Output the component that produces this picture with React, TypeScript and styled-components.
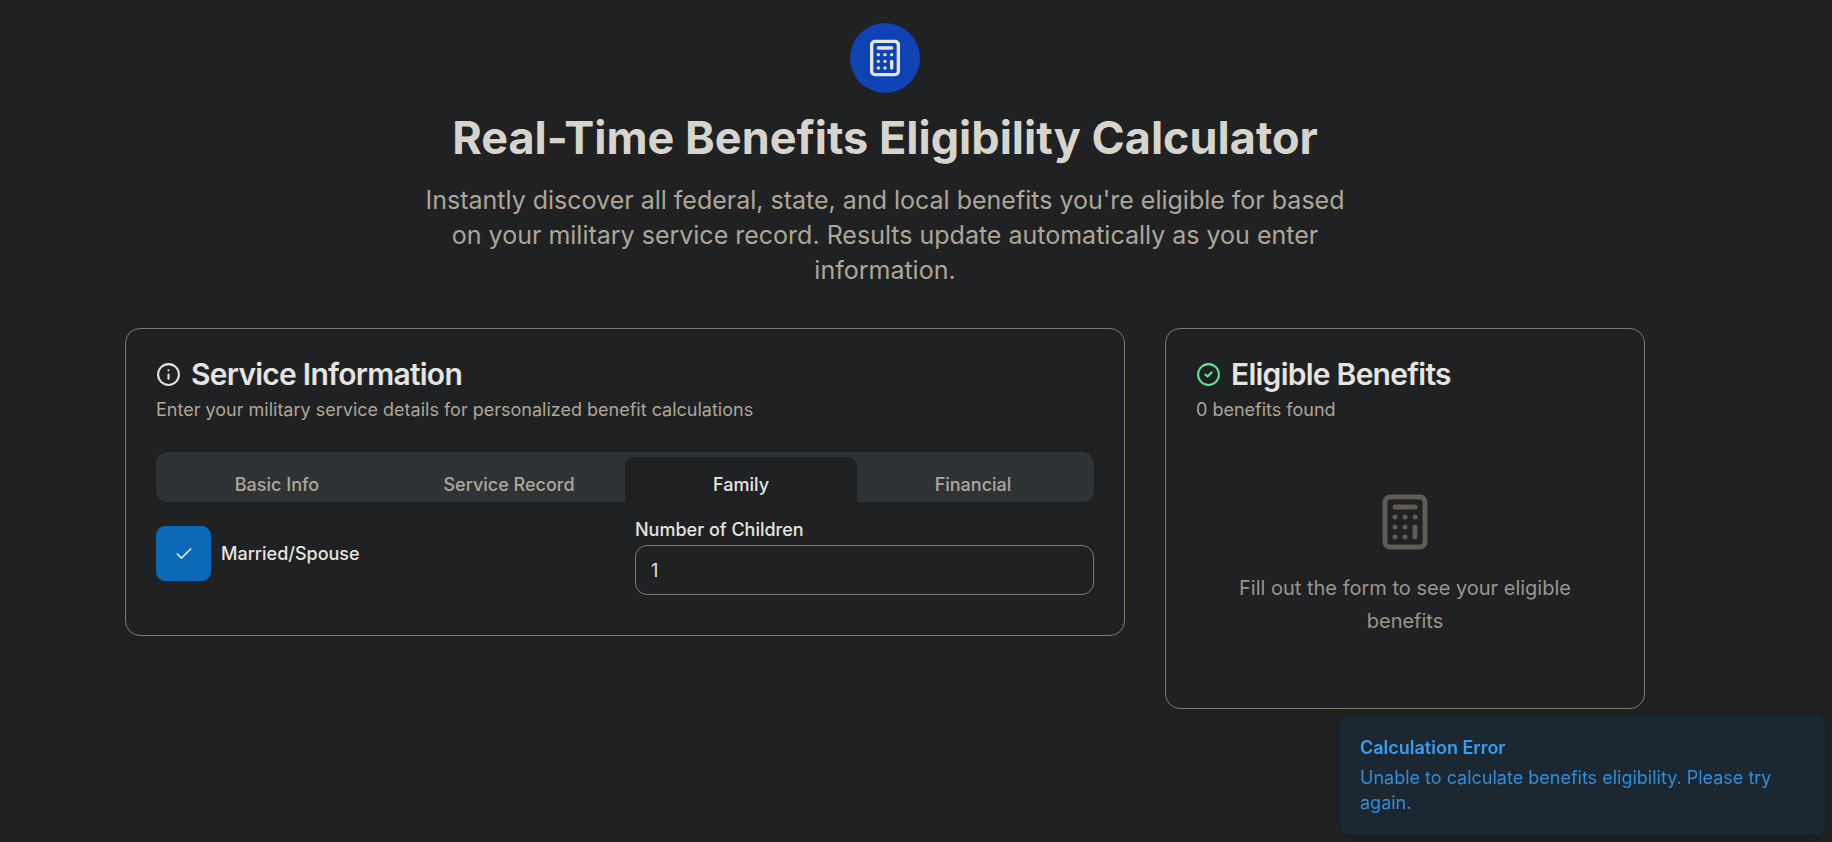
import React, { useState } from "react";
import styled, { createGlobalStyle, css } from "styled-components";

const color = {
  page: "#1f2122",
  muted: "#2f3335",
  border: "#82786a",
  heading: "#d7d4ce",
  text: "#e6e4e0",
  subtle: "#aea699",
};

const GlobalStyle = createGlobalStyle`
  *, *::before, *::after { box-sizing: border-box; }
  body {
    margin: 0;
    background: ${color.page};
    color: ${color.text};
    font-family: Inter, "Liberation Sans", sans-serif;
    font-size: 18px;
    line-height: 25px;
  }
  h1, h2, p { margin: 0; }
  button, input { font: inherit; color: inherit; }
`;

const Page = styled.div`
  padding: 23px 62px 40px 0;
`;

const Container = styled.main`
  max-width: 1600px;
  margin: 0 auto;
  padding: 0 40px;
`;

const Hero = styled.header`
  display: flex;
  flex-direction: column;
  align-items: center;
  gap: 20px;
  margin-bottom: 40px;
  text-align: center;
`;

const Badge = styled.div`
  display: grid;
  place-items: center;
  width: 70px;
  height: 70px;
  border-radius: 50%;
  background: #0f42b2;
`;

const PageTitle = styled.h1`
  color: ${color.heading};
  font-size: 45px;
  line-height: 50px;
  font-weight: 700;
`;

const Lead = styled.p`
  max-width: 940px;
  color: ${color.subtle};
  font-size: 25px;
  line-height: 35px;
`;

const Columns = styled.div`
  display: grid;
  grid-template-columns: repeat(3, minmax(0, 1fr));
  align-items: start;
  gap: 40px;
`;

const Card = styled.section<{ $wide?: boolean }>`
  grid-column: ${(p) => (p.$wide ? "span 2" : "span 1")};
  padding: 30px;
  border: 1px solid ${color.border};
  border-radius: 15px;
`;

const CardHeader = styled.div`
  display: flex;
  flex-direction: column;
  gap: 8px;
  padding-bottom: 30px;
`;

const CardTitle = styled.h2`
  display: flex;
  align-items: center;
  gap: 10px;
  font-size: 30px;
  line-height: 30px;
  font-weight: 600;
  letter-spacing: -0.025em;
`;

const CardText = styled.p`
  color: ${color.subtle};
`;

const TabList = styled.div`
  display: grid;
  grid-template-columns: repeat(4, 1fr);
  height: 50px;
  padding: 5px;
  border-radius: 12px;
  background: ${color.muted};
`;

const Tab = styled.button<{ $active: boolean }>`
  height: 55px;
  padding: 0 15px;
  border: 0;
  border-radius: 9px;
  background: none;
  color: ${color.subtle};
  font-weight: 500;
  cursor: pointer;
  ${(p) =>
    p.$active &&
    css`
      background: ${color.page};
      color: ${color.text};
    `}
`;

const Fields = styled.div`
  display: grid;
  grid-template-columns: repeat(2, minmax(0, 1fr));
  align-items: center;
  gap: 20px;
  padding: 10px 0;
`;

const CheckField = styled.div`
  display: flex;
  align-items: center;
  gap: 10px;
`;

const CheckBox = styled.span`
  display: grid;
  width: 55px;
  height: 55px;

  > * { grid-area: 1 / 1; }
  > svg { place-self: center; pointer-events: none; }
`;

const CheckInput = styled.input`
  appearance: none;
  width: 100%;
  height: 100%;
  margin: 0;
  border: 1px solid #0b69b7;
  border-radius: 9px;
  cursor: pointer;
  &:checked { background: #0b69b7; }
`;

const Label = styled.label`
  font-weight: 500;
`;

const NumberField = styled.div`
  display: flex;
  flex-direction: column;
  gap: 3px;
  padding-top: 5px;
`;

const NumberInput = styled.input`
  width: 100%;
  height: 50px;
  padding: 0 15px;
  border: 1px solid ${color.border};
  border-radius: 12px;
  background: none;
  appearance: textfield;
  &::-webkit-inner-spin-button { display: none; }
`;

const Empty = styled.div`
  display: flex;
  flex-direction: column;
  align-items: center;
  gap: 20px;
  padding: 40px 0;
  text-align: center;
`;

const EmptyText = styled.p`
  padding: 0 20px;
  color: #9c958b;
  font-size: 20px;
  line-height: 33px;
`;

const Toast = styled.div`
  position: fixed;
  right: 7px;
  bottom: 7px;
  display: flex;
  flex-direction: column;
  gap: 5px;
  width: 485px;
  padding: 20px;
  border-radius: 10px;
  background: #1c2831;
  color: #369ef2;
  box-shadow: 0 5px 15px rgba(0, 0, 0, 0.1);
`;

const ToastTitle = styled.p`
  font-weight: 600;
`;

const ToastText = styled.p`
  color: #318dd7;
`;

type IconProps = { size: number; stroke?: string; children: React.ReactNode };

const Icon = ({ size, stroke = "currentColor", children }: IconProps) => (
  <svg width={size} height={size} viewBox="0 0 24 24" fill="none" stroke={stroke} strokeWidth={2}
    strokeLinecap="round" strokeLinejoin="round" aria-hidden="true">
    {children}
  </svg>
);

const Calculator = ({ size, stroke }: { size: number; stroke?: string }) => (
  <Icon size={size} stroke={stroke}>
    <rect width="16" height="20" x="4" y="2" rx="2" />
    <path d="M8 6h8M16 14v4M16 10h.01M12 10h.01M8 10h.01M12 14h.01M8 14h.01M12 18h.01M8 18h.01" />
  </Icon>
);

const tabs = ["Basic Info", "Service Record", "Family", "Financial"];

export default function App() {
  const [active, setActive] = useState("Family");
  const [married, setMarried] = useState(true);
  const [children, setChildren] = useState("1");

  return (
    <>
      <GlobalStyle />
      <Page>
        <Container>
          <Hero>
            <Badge>
              <Calculator size={40} stroke="#e8e6e3" />
            </Badge>
            <PageTitle>Real-Time Benefits Eligibility Calculator</PageTitle>
            <Lead>
              Instantly discover all federal, state, and local benefits you're eligible for based on your military
              service record. Results update automatically as you enter information.
            </Lead>
          </Hero>
          <Columns>
            <Card $wide>
              <CardHeader>
                <CardTitle>
                  <Icon size={25}>
                    <circle cx="12" cy="12" r="10" />
                    <path d="M12 16v-4M12 8h.01" />
                  </Icon>
                  Service Information
                </CardTitle>
                <CardText>Enter your military service details for personalized benefit calculations</CardText>
              </CardHeader>
              <TabList role="tablist">
                {tabs.map((name) => (
                  <Tab key={name} type="button" role="tab" aria-selected={name === active} $active={name === active}
                    onClick={() => setActive(name)}>
                    {name}
                  </Tab>
                ))}
              </TabList>
              <Fields>
                <CheckField>
                  <CheckBox>
                    <CheckInput id="married" type="checkbox" checked={married}
                      onChange={(e) => setMarried(e.target.checked)} />
                    {married && (
                      <Icon size={20} stroke="#dcebf7">
                        <path d="M20 6 9 17l-5-5" />
                      </Icon>
                    )}
                  </CheckBox>
                  <Label htmlFor="married">Married/Spouse</Label>
                </CheckField>
                <NumberField>
                  <Label htmlFor="children">Number of Children</Label>
                  <NumberInput id="children" type="number" min="0" value={children}
                    onChange={(e) => setChildren(e.target.value)} />
                </NumberField>
              </Fields>
            </Card>
            <Card>
              <CardHeader>
                <CardTitle>
                  <Icon size={25} stroke="#5ee692">
                    <circle cx="12" cy="12" r="10" />
                    <path d="m9 12 2 2 4-4" />
                  </Icon>
                  Eligible Benefits
                </CardTitle>
                <CardText>0 benefits found</CardText>
              </CardHeader>
              <Empty>
                <Calculator size={60} stroke="#5f5b54" />
                <EmptyText>Fill out the form to see your eligible benefits</EmptyText>
              </Empty>
            </Card>
          </Columns>
        </Container>
      </Page>
      <Toast role="status">
        <ToastTitle>Calculation Error</ToastTitle>
        <ToastText>Unable to calculate benefits eligibility. Please try again.</ToastText>
      </Toast>
    </>
  );
}
